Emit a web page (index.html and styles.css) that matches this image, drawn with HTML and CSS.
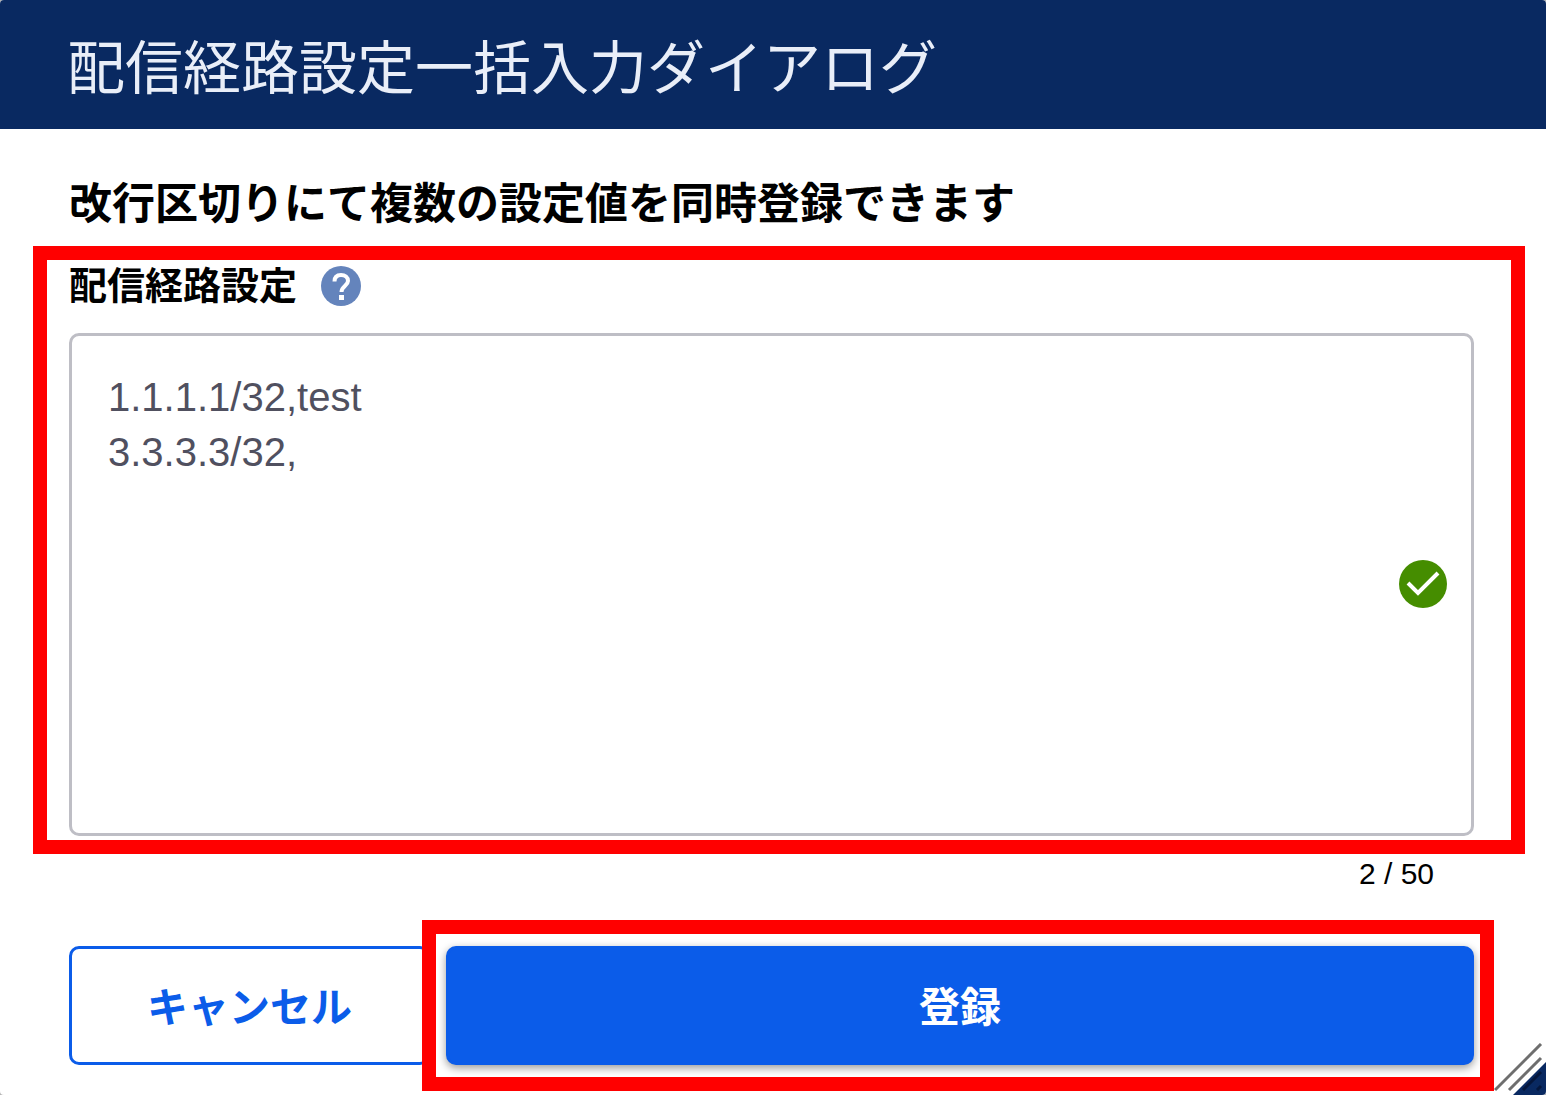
FILE: index.html
```
<!DOCTYPE html>
<html lang="ja">
  <head>
    <meta charset="utf-8" />
    <meta name="viewport" content="width=device-width, initial-scale=1.0" />
    <title>配信経路設定一括入力ダイアログ</title>
    <link rel="stylesheet" href="styles.css">
  </head>

  <body>
    <main class="dialog" role="dialog" aria-labelledby="dialog-title">
      <header class="dialog-header">
        <h1 id="dialog-title">配信経路設定一括入力ダイアログ</h1>
      </header>

      <form class="dialog-body">
        <h2>改行区切りにて複数の設定値を同時登録できます</h2>

        <div class="field">
          <div class="field-label">
            <label for="routes">配信経路設定</label>
            <button class="help" type="button" aria-label="ヘルプ">
              <svg viewBox="0 0 40 40" aria-hidden="true">
                <circle cx="20" cy="20" r="20" fill="#6484bc" />
                <path
                  d="M13.500 15.500C13.500 11 16 9 20 9s7 2.200 7 6c0 4.500-6.500 5-6.500 11"
                  fill="none"
                  stroke="#fff"
                  stroke-width="4"
                />
                <rect x="18" y="29" width="5" height="5" fill="#fff" />
              </svg>
            </button>
          </div>
          <div class="input-wrap">
            <textarea id="routes" rows="8" spellcheck="false">1.1.1.1/32,test
3.3.3.3/32,</textarea>
            <svg class="valid" viewBox="0 0 48 48" aria-hidden="true">
              <circle cx="24" cy="24" r="24" fill="#458d00" />
              <path
                d="M9 23l10 10 20-20"
                fill="none"
                stroke="#fff"
                stroke-width="4"
              />
            </svg>
          </div>
          <span class="mark mark-field"></span>
        </div>

        <p class="counter">2 / 50</p>

        <div class="actions">
          <button class="btn btn-cancel" type="button">キャンセル</button>
          <div class="submit">
            <button class="btn btn-submit" type="submit">登録</button>
            <span class="mark mark-submit"></span>
          </div>
        </div>
      </form>

      <svg class="resize" viewBox="0 0 52 52" aria-hidden="true">
        <path d="M52 19v33H19z" fill="#092961" />
        <path d="M1 47L47 1M15 47l32-32" stroke="#6e6e6e" stroke-width="3" />
        <path d="M29 47l18-18M43 47l4-4" stroke="#04163c" stroke-width="3" />
      </svg>
    </main>
  </body>
</html>
```

FILE: styles.css
```
* {
  box-sizing: border-box;
}

body {
  margin: 0;
  background: #b5b5b5;
  font-family: "Liberation Sans", "Noto Sans CJK JP", sans-serif;
  color: #000;
}

h1,
h2,
p {
  margin: 0;
}

.dialog {
  position: relative;
  min-height: 100vh;
  overflow: hidden;
  background: #fff;
  border-radius: 4px;
}

.dialog-header {
  padding: 29px 67px 20px;
  background: #092961;
  color: #e9eef8;
}

h1 {
  font-size: 58px;
  font-weight: 400;
  line-height: 80px;
}

.dialog-body {
  padding: 47px 72px 30px 69px;
}

h2 {
  font-size: 43px;
  line-height: 56px;
}

.field {
  position: relative;
  padding-top: 28px;
}

.field-label {
  display: flex;
  align-items: center;
  gap: 24px;
  margin-bottom: 21px;
  font-size: 38px;
  font-weight: 700;
  line-height: 52px;
}

.help {
  width: 40px;
  height: 40px;
  padding: 0;
  border: 0;
  background: none;
  cursor: pointer;
}

.help svg {
  display: block;
}

.input-wrap {
  position: relative;
}

textarea {
  display: block;
  width: 100%;
  padding: 34px 96px 23px 36px;
  border: 3px solid #bebec5;
  border-radius: 10px;
  background: #fff;
  color: #50505f;
  font: 40px/55px "Liberation Sans", "Noto Sans CJK JP", sans-serif;
  resize: none;
}

.valid {
  position: absolute;
  top: 50%;
  right: 27px;
  width: 48px;
  height: 48px;
  margin-top: -25px;
}

.counter {
  padding: 20px 40px 0 0;
  font-size: 30px;
  line-height: 36px;
  text-align: right;
}

.actions {
  display: grid;
  grid-template-columns: 13fr 37fr;
  gap: 16px;
  margin-top: 54px;
}

.submit {
  position: relative;
}

.btn {
  width: 100%;
  height: 119px;
  padding: 4px 0 0;
  border: 3px solid #0b5ce9;
  border-radius: 10px;
  font: 700 41px/56px "Liberation Sans", "Noto Sans CJK JP", sans-serif;
  cursor: pointer;
}

.btn-cancel {
  background: #fff;
  color: #0b5ce9;
}

.btn-submit {
  display: block;
  background: #0b5ce9;
  color: #fff;
  box-shadow: 0 3px 8px rgba(0, 0, 0, 0.4);
}

/* red frames over the areas to fill in and press */
.mark {
  position: absolute;
  border: 14px solid #f00;
  pointer-events: none;
}

.mark-field {
  inset: 14px -51px -18px -36px;
}

.mark-submit {
  inset: -26px -20px -26px -24px;
}

.resize {
  position: absolute;
  right: 0;
  bottom: 0;
  width: 52px;
  height: 52px;
}
```
